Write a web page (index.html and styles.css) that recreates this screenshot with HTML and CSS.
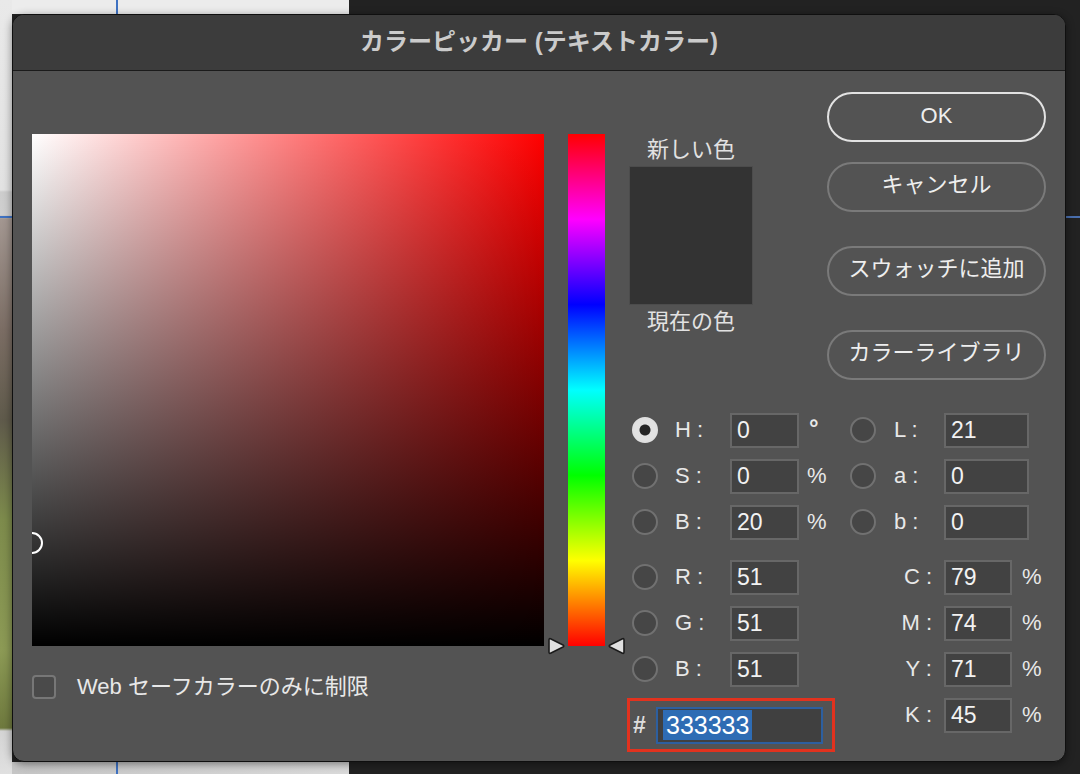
FILE: index.html
```html
<!DOCTYPE html>
<html lang="ja">
<head>
    <meta charset="utf-8">
    <title>カラーピッカー</title>

    <!-- Styling -->
    <link rel="stylesheet" href="styles.css">
</head>
<body>
    <div class="dialog">
        <div class="titlebar">カラーピッカー (テキストカラー)</div>

        <div class="content">
            <!-- Saturation / brightness field -->
            <div class="picker">
                <div class="field">
                    <span class="marker"></span>
                </div>
                <div class="websafe">
                    <span class="checkbox"></span>
                    <span>Web セーフカラーのみに制限</span>
                </div>
            </div>

            <!-- Hue slider -->
            <div class="hue">
                <svg class="arrow arrow-left" width="18" height="18" viewBox="0 0 18 18">
                    <path d="M2 3 Q2 1 4 2 L16 8 Q17.5 9 16 10 L4 16 Q2 17 2 15 Z" />
                </svg>
                <svg class="arrow arrow-right" width="18" height="18" viewBox="0 0 18 18">
                    <path d="M16 3 Q16 1 14 2 L2 8 Q0.5 9 2 10 L14 16 Q16 17 16 15 Z" />
                </svg>
            </div>

            <div class="side">
                <div class="side-top">
                    <div class="preview">
                        <div class="caption">新しい色</div>
                        <div class="swatch"></div>
                        <div class="caption">現在の色</div>
                    </div>

                    <div class="buttons">
                        <button type="button" class="btn primary">OK</button>
                        <button type="button" class="btn">キャンセル</button>
                        <button type="button" class="btn spaced">スウォッチに追加</button>
                        <button type="button" class="btn spaced">カラーライブラリ</button>
                    </div>
                </div>

                <div class="fields">
                    <!-- HSB / RGB / hex -->
                    <div class="col hsb">
                        <div class="row">
                            <span class="radio on"></span>
                            <span class="label">H :</span>
                            <span class="num">0</span>
                            <span class="unit deg">°</span>
                        </div>
                        <div class="row">
                            <span class="radio"></span>
                            <span class="label">S :</span>
                            <span class="num">0</span>
                            <span class="unit">%</span>
                        </div>
                        <div class="row">
                            <span class="radio"></span>
                            <span class="label">B :</span>
                            <span class="num">20</span>
                            <span class="unit">%</span>
                        </div>
                        <div class="row sep">
                            <span class="radio"></span>
                            <span class="label">R :</span>
                            <span class="num">51</span>
                        </div>
                        <div class="row">
                            <span class="radio"></span>
                            <span class="label">G :</span>
                            <span class="num">51</span>
                        </div>
                        <div class="row">
                            <span class="radio"></span>
                            <span class="label">B :</span>
                            <span class="num">51</span>
                        </div>
                        <div class="hex">
                            <span class="hash">#</span>
                            <span class="hex-input"><span class="selected">333333</span></span>
                        </div>
                    </div>

                    <!-- Lab / CMYK -->
                    <div class="col lab">
                        <div class="row">
                            <span class="radio"></span>
                            <span class="label">L :</span>
                            <span class="num wide">21</span>
                        </div>
                        <div class="row">
                            <span class="radio"></span>
                            <span class="label">a :</span>
                            <span class="num wide">0</span>
                        </div>
                        <div class="row">
                            <span class="radio"></span>
                            <span class="label">b :</span>
                            <span class="num wide">0</span>
                        </div>
                        <div class="row sep cmyk">
                            <span class="label">C :</span>
                            <span class="num">79</span>
                            <span class="unit">%</span>
                        </div>
                        <div class="row cmyk">
                            <span class="label">M :</span>
                            <span class="num">74</span>
                            <span class="unit">%</span>
                        </div>
                        <div class="row cmyk">
                            <span class="label">Y :</span>
                            <span class="num">71</span>
                            <span class="unit">%</span>
                        </div>
                        <div class="row cmyk">
                            <span class="label">K :</span>
                            <span class="num">45</span>
                            <span class="unit">%</span>
                        </div>
                    </div>
                </div>
            </div>
        </div>
    </div>
</body>
</html>
```

FILE: styles.css
```css
* {
    box-sizing: border-box;
}

:root {
    --panel:      #535353;
    --title:      #3c3c3c;
    --field-bg:   #424242;
    --field-line: #676767;
    --text:       #e8e8e8;
    --blue-line:  #3f72c2;
}

html, body {
    margin: 0;
}

body {
    width: 1080px;
    height: 774px;
    overflow: hidden;

    font-family: "Liberation Sans", "Noto Sans CJK JP", sans-serif;
    color: var( --text );

    /* the desktop peeking out around the dialog */
    background-color: #222222;
    background-image:
        linear-gradient( var( --blue-line ), var( --blue-line ) ),
        linear-gradient( var( --blue-line ), var( --blue-line ) ),
        linear-gradient( #4a6fae, #4a6fae ),
        linear-gradient( var( --blue-line ), var( --blue-line ) ),
        linear-gradient( to bottom,
            #e9e9e9 0, #e2e2e2 190px, #cdcdcd 192px, #cfcfcf 215px,
            #a39791 219px, #7b6d64 330px, #5f5a4b 420px, #7d8b4c 520px,
            #8c9a55 650px, #6e793e 728px, #d4d4d4 731px, #e0e0e0 774px ),
        linear-gradient( #ececec, #ececec ),
        linear-gradient( to right, #c4c4c4, #dadada );
    background-size:
        2px 14px, 2px 12px, 14px 2px, 12px 2px,
        12px 774px, 349px 14px, 349px 12px;
    background-position:
        116px 0, 116px 762px, 1066px 216px, 0 216px,
        0 0, 0 0, 0 762px;
    background-repeat: no-repeat;
}

.dialog {
    width: 1054px;
    height: 748px;
    margin: 14px 0 0 12px;

    overflow: hidden;
    background-color: var( --panel );
    border: 1px solid #0f0f0f;
    border-radius: 12px;
    box-shadow: 0 2px 8px rgba( 0, 0, 0, 0.45 );
}

.titlebar {
    height: 56px;
    line-height: 54px;
    text-align: center;

    font-size: 24px;
    font-weight: bold;
    color: #cbcbcb;

    background-color: var( --title );
    border-bottom: 1px solid #1b1b1b;
}

.content {
    display: flex;
    align-items: flex-start;
    padding-left: 19px;
}

/* colour field */
.picker {
    margin-top: 63px;
}

.field {
    position: relative;
    width: 512px;
    height: 512px;
    overflow: hidden;

    background-image:
        linear-gradient( to top, #000000, rgba( 0, 0, 0, 0 ) ),
        linear-gradient( to right, #ffffff, #ff0000 );
}

.marker {
    position: absolute;
    left: -11px;
    top: 398px;
    width: 22px;
    height: 22px;

    border: 2px solid #ffffff;
    border-radius: 50%;
}

.websafe {
    display: flex;
    align-items: center;
    gap: 21px;
    margin-top: 29px;

    font-size: 22px;
    line-height: 24px;
    color: var( --text );
}

.checkbox {
    width: 24px;
    height: 24px;

    background-color: #4a4a4a;
    border: 2px solid #777777;
    border-radius: 4px;
}

/* hue slider */
.hue {
    position: relative;
    width: 37px;
    height: 512px;
    margin-top: 63px;
    margin-left: 24px;

    background-image: linear-gradient( to bottom,
        #ff0000, #ff00ff, #0000ff, #00ffff, #00ff00, #ffff00, #ff0000 );
}

.arrow {
    position: absolute;
    bottom: -9px;
    display: block;
    width: 18px;
    height: 18px;
    overflow: visible;
}

.arrow path {
    fill: #e0e0e0;
    stroke: #1c1c1c;
    stroke-width: 1.6;
    stroke-linejoin: round;
}

.arrow-left {
    left: -21px;
}

.arrow-right {
    right: -21px;
}

/* right hand side */
.side {
    width: 418px;
    margin-left: 23px;
}

.side-top {
    display: flex;
    justify-content: space-between;
}

.preview {
    width: 122px;
    margin-top: 67px;
    margin-left: 2px;
    text-align: center;
}

.caption {
    font-size: 22px;
    line-height: 24px;
    color: #e2e2e2;
}

.swatch {
    height: 137px;
    margin: 5px 0 6px;
    background-color: #333333;
    box-shadow: 0 0 0 1px #4c4c4c;
}

.buttons {
    display: flex;
    flex-direction: column;
    gap: 20px;
    width: 219px;
    margin-top: 21px;
}

.btn {
    height: 50px;
    padding: 0 0 5px;

    font-family: inherit;
    font-size: 22px;
    line-height: 24px;
    color: #eeeeee;

    background-color: var( --panel );
    border: 2px solid #7a7a7a;
    border-radius: 25px;
}

.btn.primary {
    padding-bottom: 3px;
    border-color: #e2e2e2;
}

.btn.spaced {
    margin-top: 14px;
}

/* value fields */
.fields {
    display: flex;
    margin-top: 33px;
}

.col {
    display: flex;
    flex-direction: column;
    gap: 12px;
}

.hsb {
    width: 207px;
}

.lab {
    margin-left: 15px;
}

.row {
    display: flex;
    align-items: center;
    height: 34px;
}

.row.sep {
    margin-top: 9px;
}

.radio {
    flex: none;
    width: 26px;
    height: 26px;

    background-color: #464646;
    border: 2px solid #717171;
    border-radius: 50%;
}

.radio.on {
    border-color: #e0e0e0;
    background: radial-gradient( circle, #262626 0, #262626 5px, #e2e2e2 6px );
}

.hsb .radio {
    margin-left: 4px;
}

.label {
    flex: none;
    width: 55px;
    margin-left: 17px;

    font-size: 22px;
    color: var( --text );
    white-space: pre;
}

.lab .label {
    width: 50px;
    margin-left: 18px;
}

.cmyk .label {
    width: 84px;
    margin-left: 0;
    padding-right: 2px;
    text-align: right;
}

.num {
    flex: none;
    width: 69px;
    height: 35px;
    padding-left: 5px;

    font-size: 23px;
    line-height: 31px;
    color: #f2f2f2;

    background-color: var( --field-bg );
    border: 2px solid var( --field-line );
}

.num.wide {
    width: 85px;
}

.cmyk .num {
    width: 68px;
    margin-left: 10px;
}

.unit {
    margin-left: 8px;
    font-size: 22px;
    color: var( --text );
}

.unit.deg {
    margin-left: 10px;
    margin-top: -4px;
    font-size: 24px;
    font-weight: bold;
}

.cmyk .unit {
    margin-left: 10px;
}

/* hex value, outlined in red */
.hex {
    display: flex;
    align-items: center;
    width: 208px;
    height: 54px;
    margin-left: -1px;
    padding-left: 3px;

    border: 3px solid #e2321e;
}

.hash {
    width: 12px;
    font-size: 23px;
    font-weight: bold;
    color: #dddddd;
}

.hex-input {
    display: flex;
    align-items: center;
    width: 167px;
    height: 37px;
    margin-left: 11px;
    padding-left: 5px;

    background-color: #404040;
    border: 2px solid #2d5f9f;
}

.selected {
    height: 30px;
    padding: 0 3px;

    font-size: 25px;
    line-height: 30px;
    color: #ffffff;

    background-color: #2e6cb4;
}
```
